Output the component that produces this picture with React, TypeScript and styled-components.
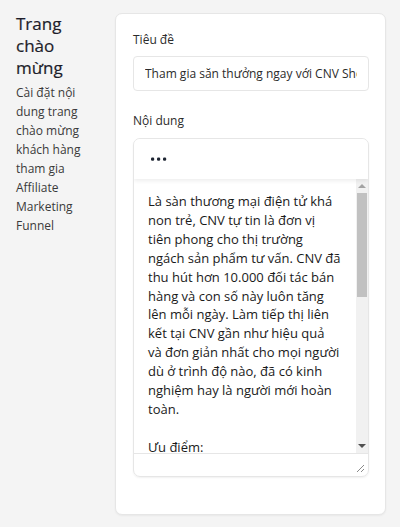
import React from "react";
import styled, { createGlobalStyle } from "styled-components";

const Global = createGlobalStyle`
  html, body { margin: 0; padding: 0; background: #f4f4f4; }
  body { font-family: "Open Sans", "Noto Sans", sans-serif; color: #222; }
  * { box-sizing: border-box; }
`;

const Page = styled.div`
  display: flex;
  align-items: flex-start;
  gap: 14px;
  padding: 13px 14px 12px 16px;
  width: 400px;
  min-height: 527px;
`;

const Side = styled.aside`
  width: 85px;
  flex: none;
`;

const SideTitle = styled.h1`
  margin: 0;
  font-size: 17px;
  line-height: 22px;
  font-weight: 400;
  -webkit-text-stroke: 0.2px #1d1d2a;
  color: #1d1d2a;
`;

const SideText = styled.p`
  margin: 4px 0 0;
  font-size: 12px;
  line-height: 19px;
  color: #3a3a3a;
`;

const Card = styled.section`
  flex: 1;
  background: #fff;
  border: 1px solid #e6e6e6;
  border-radius: 7px;
  box-shadow: 0 1px 2px rgba(0, 0, 0, 0.05);
  padding: 17px 16px 37px 17px;
`;

const Label = styled.div<{ $mb: number }>`
  font-size: 12px;
  line-height: 18px;
  color: #2b2b2b;
  margin-bottom: ${(p) => p.$mb}px;
`;

const Input = styled.input`
  display: block;
  width: 100%;
  height: 35px;
  border: 1px solid #e6e6e6;
  border-radius: 4px;
  padding: 0 11px;
  font-family: inherit;
  font-size: 12px;
  color: #2b2b2b;
  background: #fff;
  outline: none;
  margin-bottom: 21px;
`;

const Editor = styled.div`
  border: 1px solid #e6e6e6;
  border-radius: 7px;
  height: 339px;
  display: flex;
  flex-direction: column;
  overflow: hidden;
  box-shadow: 0 1px 2px rgba(0, 0, 0, 0.06);
`;

const Toolbar = styled.div`
  height: 40px;
  flex: none;
  display: flex;
  align-items: center;
  padding-left: 16px;
  position: relative;
  z-index: 1;
  box-shadow: 0 2px 4px rgba(0, 0, 0, 0.07);
  background: #fff;
`;

const ContentRow = styled.div`
  flex: 1;
  display: flex;
  min-height: 0;
  border-bottom: 1px solid #e6e6e6;
`;

const Body = styled.div`
  flex: 1;
  overflow: hidden;
  padding: 13px 0 0 14px;
  font-size: 13px;
  line-height: 18.9px;
  color: #1a1a1a;
  white-space: nowrap;
`;

const Para = styled.p`
  margin: 0 0 18.9px;
`;

const Track = styled.div`
  width: 12px;
  flex: none;
  background: #f1f1f1;
  display: flex;
  flex-direction: column;
  align-items: center;
`;

const ArrowBox = styled.div`
  width: 12px;
  height: 14px;
  flex: none;
  display: flex;
  align-items: center;
  justify-content: center;
`;

const Triangle = styled.span<{ $up?: boolean; $color: string }>`
  width: 0;
  height: 0;
  border-left: 4px solid transparent;
  border-right: 4px solid transparent;
  ${(p) =>
    p.$up
      ? `border-bottom: 4px solid ${p.$color};`
      : `border-top: 4px solid ${p.$color};`}
`;

const Thumb = styled.div`
  width: 10px;
  height: 104px;
  background: #c1c1c1;
  flex: none;
`;

const Spacer = styled.div`
  flex: 1;
`;

const StatusBar = styled.div`
  height: 22px;
  flex: none;
  display: flex;
  justify-content: flex-end;
  align-items: flex-end;
  padding: 0 3px 3px 0;
`;

const lines = [
  "Là sàn thương mại điện tử khá",
  "non trẻ, CNV tự tin là đơn vị",
  "tiên phong cho thị trường",
  "ngách sản phẩm tư vấn. CNV đã",
  "thu hút hơn 10.000 đối tác bán",
  "hàng và con số này luôn tăng",
  "lên mỗi ngày. Làm tiếp thị liên",
  "kết tại CNV gần như hiệu quả",
  "và đơn giản nhất cho mọi người",
  "dù ở trình độ nào, đã có kinh",
  "nghiệm hay là người mới hoàn",
  "toàn.",
];

export default function App() {
  return (
    <>
      <Global />
      <Page>
        <Side>
          <SideTitle>
            Trang
            <br />
            chào
            <br />
            mừng
          </SideTitle>
          <SideText>
            Cài đặt nội
            <br />
            dung trang
            <br />
            chào mừng
            <br />
            khách hàng
            <br />
            tham gia
            <br />
            Affiliate
            <br />
            Marketing
            <br />
            Funnel
          </SideText>
        </Side>
        <Card>
          <Label $mb={7}>Tiêu đề</Label>
          <Input readOnly value="Tham gia săn thưởng ngay với CNV Shop" />
          <Label $mb={8}>Nội dung</Label>
          <Editor>
            <Toolbar>
              <svg width="18" height="6" viewBox="0 0 18 6">
                <rect x="1" y="1.5" width="3.2" height="3.2" rx="1.2" fill="#1f2633" />
                <rect x="7" y="1.5" width="3.2" height="3.2" rx="1.2" fill="#1f2633" />
                <rect x="13" y="1.5" width="3.2" height="3.2" rx="1.2" fill="#1f2633" />
              </svg>
            </Toolbar>
            <ContentRow>
              <Body>
                <Para>
                  {lines.map((l, i) => (
                    <React.Fragment key={i}>
                      {l}
                      {i < lines.length - 1 && <br />}
                    </React.Fragment>
                  ))}
                </Para>
                <Para>Ưu điểm:</Para>
              </Body>
              <Track>
                <ArrowBox>
                  <Triangle $up $color="#a3a3a3" />
                </ArrowBox>
                <Thumb />
                <Spacer />
                <ArrowBox>
                  <Triangle $color="#505050" />
                </ArrowBox>
              </Track>
            </ContentRow>
            <StatusBar>
              <svg width="9" height="9" viewBox="0 0 9 9">
                <path d="M8 1 L1 8 M8 5 L5 8" stroke="#8a8a8a" strokeWidth="1" fill="none" />
              </svg>
            </StatusBar>
          </Editor>
        </Card>
      </Page>
    </>
  );
}
